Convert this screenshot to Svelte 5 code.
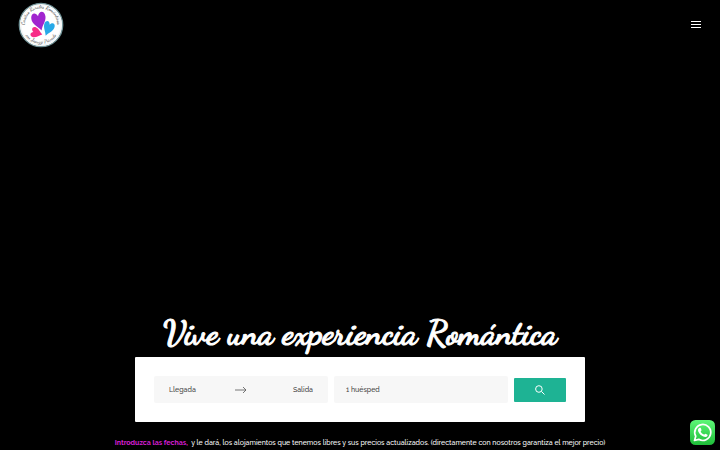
<script>
  let arrival = $state('');
  let departure = $state('');
  let guests = $state('1');
</script>

<div class="page">
  <header>
    <a class="logo" href="/" aria-label="Casitas Rurales Románticas con Jacuzzi Privado">
      <svg viewBox="0 0 90 90" width="46" height="46">
        <defs>
          <path id="ring-top" d="M16 58A32 32 0 1 1 74 58" />
          <path id="ring-bottom" d="M11 59A37 37 0 0 0 79 59" />
        </defs>
        <circle cx="45" cy="45" r="42.5" fill="#fff" stroke="#6f9196" stroke-width="2.5" />
        <circle cx="45" cy="45" r="39.5" fill="none" stroke="#dde6e8" stroke-width="1" />
        <g class="ring">
          <text><textPath href="#ring-top" startOffset="50%" text-anchor="middle">Casitas Rurales Románticas</textPath></text>
          <text><textPath href="#ring-bottom" startOffset="50%" text-anchor="middle">con Jacuzzi Privado</textPath></text>
        </g>
        <path transform="translate(41 35) rotate(-14) scale(1 1.25)" fill="#a125cf" d="M0 17C-5 9-15 4-14-4C-13-13-3-14 0-6C4-14 15-13 14-3C13 5 4 9 0 17Z" />
        <path transform="translate(60 50) rotate(20) scale(1.05 1.15)" fill="#28a9e8" d="M0 15C-3 8-10 3-10-4C-9-12-2-11 0-5C3-12 11-10 10-2C9 5 3 8 0 15Z" />
        <path transform="translate(35 60) rotate(-75)" fill="#f72c87" d="M0 13C-3 7-10 3-10-4C-9-11-2-11 0-5C3-11 11-10 10-2C9 4 3 7 0 13Z" />
      </svg>
    </a>
    <button class="menu" aria-label="Abrir menú">
      <svg viewBox="0 0 10 8" width="10" height="8"><path d="M0 .5H10M0 3.5H10M0 6.5H10" stroke="#fff" stroke-width="1" /></svg>
    </button>
  </header>

  <main>
    <h1>Vive una experiencia Romántica</h1>
    <form onsubmit={(e) => e.preventDefault()}>
      <div class="field dates">
        <input aria-label="Llegada" placeholder="Llegada" bind:value={arrival} />
        <svg viewBox="0 0 12 8" width="12" height="8"><path d="M0 4H11M8 1L11 4L8 7" fill="none" stroke="#555" stroke-width=".8" /></svg>
        <input class="end" aria-label="Salida" placeholder="Salida" bind:value={departure} />
      </div>
      <select class="field" aria-label="Huéspedes" bind:value={guests}>
        <option value="1">1 huésped</option>
        <option value="2">2 huéspedes</option>
      </select>
      <button class="search" aria-label="Buscar">
        <svg viewBox="0 0 10 10" width="10" height="10"><path d="M6.5 6.5L9.5 9.5M7.2 4A3.3 3.3 0 1 1 .6 4A3.3 3.3 0 0 1 7.2 4Z" fill="none" stroke="#fff" stroke-width="1" /></svg>
      </button>
    </form>
    <p><strong>Introduzca las fechas,</strong>&nbsp; y le dará, los alojamientos que tenemos libres y sus precios actualizados. (directamente con nosotros garantiza el mejor precio)</p>
  </main>

  <a class="whatsapp" href="https://wa.me/" aria-label="WhatsApp">
    <svg viewBox="0 0 50 50" width="25" height="25">
      <defs><linearGradient id="green" x2="0" y2="1"><stop stop-color="#5df777" /><stop offset="1" stop-color="#1fbd39" /></linearGradient></defs>
      <rect width="50" height="50" rx="11" fill="url(#green)" />
      <path d="M9 41L11.5 32.5A16 16 0 1 1 17.5 38.7Z" fill="none" stroke="#fff" stroke-width="3.4" stroke-linejoin="round" />
      <path d="M18.5 16C19.5 15 21 15 21.5 16L23 20C23.3 21 21 22.5 21.5 23.5C23 26 25 28 28 29.2C29 29.5 30 27 31 27.3L35 29.3C36 30 34.5 34 31 34C24 34 16 26 16 20C16 18 17.3 16.8 18.5 16Z" fill="#fff" />
    </svg>
  </a>
</div>

<style>
  :global(body) { margin: 0; background: #000; }
  .page {
    box-sizing: border-box;
    min-height: 100vh;
    display: flex;
    flex-direction: column;
    justify-content: space-between;
    background: #000;
    color: #fff;
    font-family: Raleway, Lato, "Liberation Sans", sans-serif;
  }
  header {
    display: flex;
    align-items: center;
    justify-content: space-between;
    padding: 2px 13px 2px 18px;
  }
  svg { display: block; flex: none; }
  .ring text { font: 600 10px "Dancing Script", Lato, cursive; fill: #444; }
  button { border: 0; padding: 0; cursor: pointer; }
  .menu { background: none; padding: 6px; }
  main {
    display: flex;
    flex-direction: column;
    align-items: center;
    padding: 0 16px 1px;
  }
  h1 {
    margin: 0 0 3px;
    font: 700 34px/40px "Dancing Script", Lato, cursive;
    -webkit-text-stroke: 1px #fff;
    text-align: center;
  }
  form {
    box-sizing: border-box;
    width: 100%;
    max-width: 450px;
    display: grid;
    grid-template-columns: 1fr 1fr auto;
    align-items: center;
    gap: 6px;
    padding: 19px;
    background: #fff;
    border-radius: 1px;
  }
  .field {
    box-sizing: border-box;
    width: 100%;
    min-width: 0;
    height: 27px;
    border: 0;
    border-radius: 2px;
    background: #f7f7f7;
    color: #444;
    font: 500 7px/12px Raleway, Lato, sans-serif;
  }
  .dates {
    display: flex;
    align-items: center;
    justify-content: space-between;
    padding: 0 15px;
  }
  input {
    width: 60px;
    min-width: 0;
    border: 0;
    padding: 0;
    background: none;
    color: inherit;
    font: inherit;
  }
  input::placeholder { color: #444; opacity: 1; }
  .end { text-align: right; }
  select { appearance: none; padding: 0 12px; }
  .search {
    width: 52px;
    height: 24px;
    display: grid;
    place-items: center;
    border-radius: 1px;
    background: #1eb394;
  }
  p {
    margin: 15px 0 0;
    font-size: 7px;
    line-height: 12px;
    font-weight: 500;
    text-align: center;
  }
  strong { color: #d81fd6; font-weight: 700; }
  .whatsapp { position: fixed; right: 5px; bottom: 5px; }
</style>
